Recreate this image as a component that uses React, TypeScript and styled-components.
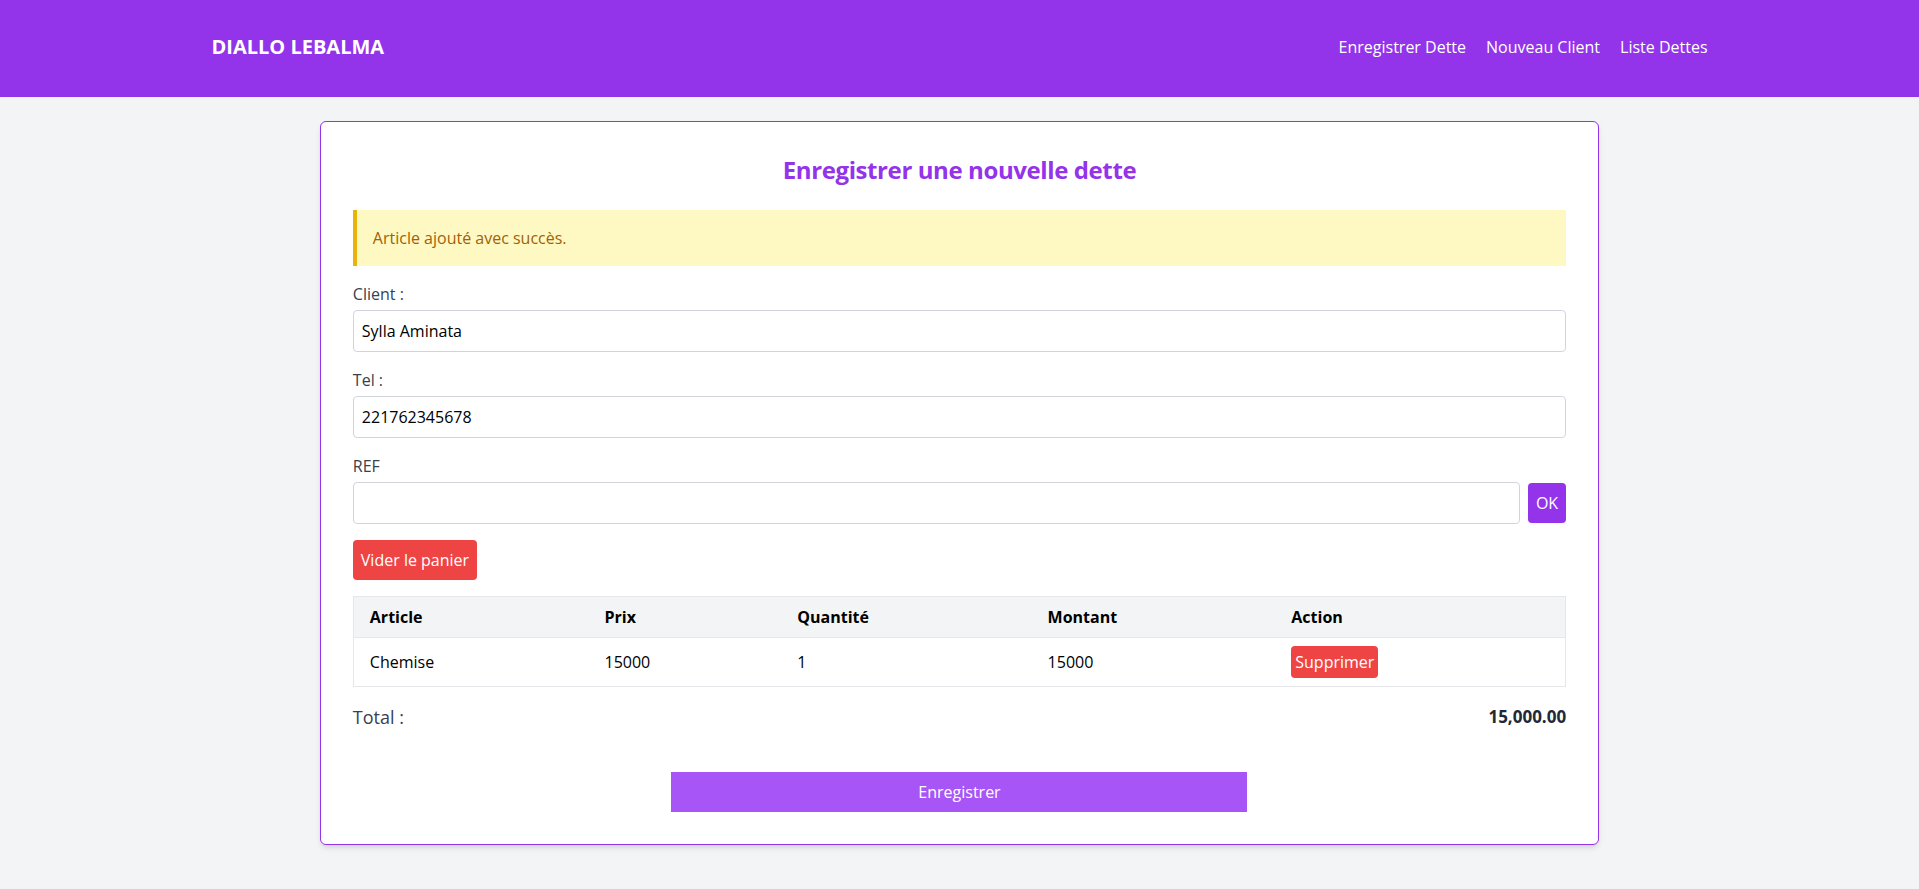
import React from "react";
import styled, { createGlobalStyle } from "styled-components";

const GlobalStyle = createGlobalStyle`
  * { box-sizing: border-box; }
  body {
    margin: 0;
    background: #f3f4f6;
    font-family: "Open Sans", "Noto Sans", "Liberation Sans", sans-serif;
    font-size: 16px;
    line-height: 24px;
    color: #000;
  }
`;

const Header = styled.header`
  background: #9333ea;
  color: #fff;
`;

const HeaderInner = styled.div`
  max-width: 1536px;
  margin: 0 auto;
  padding: 33px 20px 36px;
  display: flex;
  align-items: center;
  justify-content: space-between;
`;

const Brand = styled.div`
  font-size: 20px;
  line-height: 28px;
  font-weight: 700;
`;

const Nav = styled.nav`
  display: flex;
  gap: 20px;
`;

const NavLink = styled.a`
  color: #fff;
  text-decoration: none;
  font-size: 16px;
  line-height: 24px;
`;

const Card = styled.main`
  width: 66.6667%;
  margin: 24px auto;
  background: #fff;
  border: 1px solid #9333ea;
  border-radius: 6px;
  box-shadow: 0 4px 6px -1px rgba(0, 0, 0, 0.1), 0 2px 4px -2px rgba(0, 0, 0, 0.1);
  padding: 32px;
`;

const Title = styled.h1`
  margin: 0 0 24px;
  text-align: center;
  font-size: 24px;
  line-height: 32px;
  font-weight: 700;
  letter-spacing: -0.4px;
  color: #9333ea;
`;

const Alert = styled.div`
  background: #fef9c3;
  border-left: 4px solid #eab308;
  color: #a16207;
  padding: 16px;
  margin-bottom: 16px;
`;

const Field = styled.div`
  margin-bottom: 16px;
`;

const Label = styled.label`
  display: block;
  color: #374151;
  margin-bottom: 4px;
`;

const Input = styled.input`
  display: block;
  width: 100%;
  height: 42px;
  border: 1px solid #d1d5db;
  border-radius: 4px;
  padding: 8px;
  font-family: inherit;
  font-size: 16px;
  line-height: 24px;
  color: #000;
  background: #fff;
  outline: none;
`;

const InputRow = styled.div`
  display: flex;
  align-items: center;
  gap: 8px;
`;

const Button = styled.button<{ $bg: string; $pad?: string }>`
  background: ${(p) => p.$bg};
  color: #fff;
  border: none;
  border-radius: 4px;
  padding: ${(p) => p.$pad ?? "8px"};
  font-family: inherit;
  font-size: 16px;
  line-height: 24px;
  cursor: pointer;
  flex-shrink: 0;
`;

const ClearRow = styled.div`
  margin-bottom: 16px;
`;

const Table = styled.table`
  width: 100%;
  border-collapse: collapse;
  border: 1px solid #e5e7eb;
  table-layout: fixed;
`;

const Th = styled.th`
  background: #f3f4f6;
  text-align: left;
  padding: 8px 16px;
  font-weight: 700;
  color: #000;
`;

const Td = styled.td`
  padding: 8px 16px;
  border-top: 1px solid #e5e7eb;
  color: #000;
`;

const TotalRow = styled.div`
  display: flex;
  justify-content: space-between;
  margin-top: 16px;
  font-size: 18px;
  line-height: 28px;
`;

const TotalLabel = styled.span`
  color: #374151;
`;

const TotalValue = styled.span`
  color: #1f2937;
  font-weight: 700;
  font-size: 17px;
`;

const Submit = styled.button`
  display: block;
  width: 100%;
  max-width: 576px;
  height: 40px;
  margin: 41px auto 0;
  background: #a855f7;
  color: #fff;
  border: none;
  font-family: inherit;
  font-size: 16px;
  line-height: 24px;
  cursor: pointer;
`;

const cols = ["19.4%", "15.9%", "20.65%", "20.1%", "23.95%"];

const items = [{ article: "Chemise", prix: 15000, qte: 1 }];

export default function App() {
  const total = items.reduce((s, i) => s + i.prix * i.qte, 0);
  return (
    <>
      <GlobalStyle />
      <Header>
        <HeaderInner>
          <Brand>DIALLO LEBALMA</Brand>
          <Nav>
            <NavLink href="#">Enregistrer Dette</NavLink>
            <NavLink href="#">Nouveau Client</NavLink>
            <NavLink href="#">Liste Dettes</NavLink>
          </Nav>
        </HeaderInner>
      </Header>
      <Card>
        <Title>Enregistrer une nouvelle dette</Title>
        <Alert>Article ajouté avec succès.</Alert>
        <Field>
          <Label>Client :</Label>
          <Input defaultValue="Sylla Aminata" />
        </Field>
        <Field>
          <Label>Tel :</Label>
          <Input defaultValue="221762345678" />
        </Field>
        <Field>
          <Label>REF</Label>
          <InputRow>
            <Input />
            <Button $bg="#9333ea">OK</Button>
          </InputRow>
        </Field>
        <ClearRow>
          <Button $bg="#ef4444">Vider le panier</Button>
        </ClearRow>
        <Table>
          <colgroup>
            {cols.map((w, i) => (
              <col key={i} style={{ width: w }} />
            ))}
          </colgroup>
          <thead>
            <tr>
              <Th>Article</Th>
              <Th>Prix</Th>
              <Th>Quantité</Th>
              <Th>Montant</Th>
              <Th>Action</Th>
            </tr>
          </thead>
          <tbody>
            {items.map((it) => (
              <tr key={it.article}>
                <Td>{it.article}</Td>
                <Td>{it.prix}</Td>
                <Td>{it.qte}</Td>
                <Td>{it.prix * it.qte}</Td>
                <Td>
                  <Button $bg="#ef4444" $pad="4px">
                    Supprimer
                  </Button>
                </Td>
              </tr>
            ))}
          </tbody>
        </Table>
        <TotalRow>
          <TotalLabel>Total :</TotalLabel>
          <TotalValue>
            {total.toLocaleString("en-US", { minimumFractionDigits: 2, maximumFractionDigits: 2 })}
          </TotalValue>
        </TotalRow>
        <Submit>Enregistrer</Submit>
      </Card>
    </>
  );
}
